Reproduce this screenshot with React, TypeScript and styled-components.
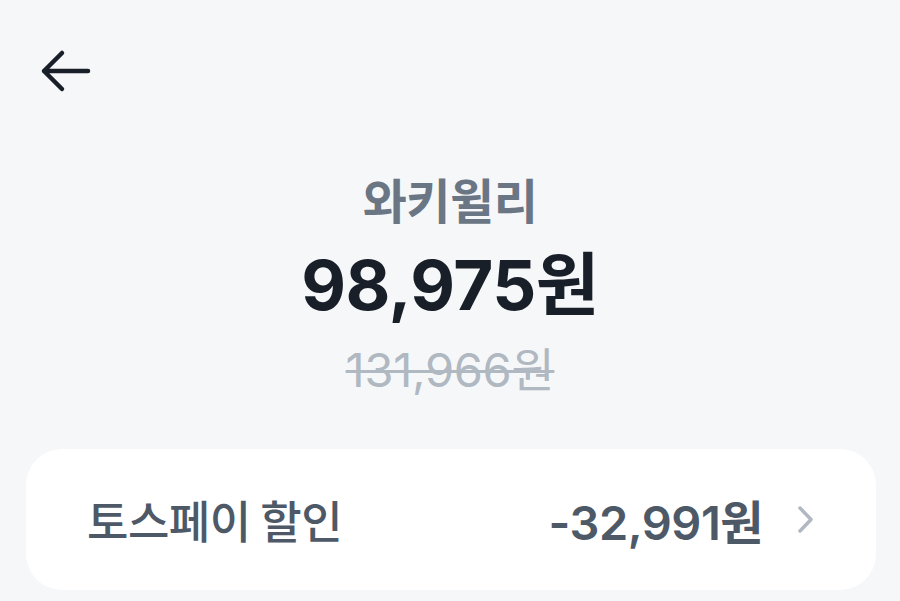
import React from "react";
import styled, { createGlobalStyle } from "styled-components";

const Global = createGlobalStyle`
  html, body { margin: 0; padding: 0; background: #f6f7f9; }
  body { font-family: Inter, "Noto Sans CJK KR", sans-serif; }
`;

const Page = styled.div`
  width: 900px;
  height: 601px;
  overflow: hidden;
  background: #f6f7f9;
  display: flex;
  flex-direction: column;
`;

const TopBar = styled.div`
  height: 140px;
  display: flex;
  align-items: flex-start;
  padding: 48px 0 0 40px;
  box-sizing: border-box;
`;

const BackButton = styled.button`
  border: none;
  background: none;
  padding: 0;
  width: 54px;
  height: 46px;
  display: flex;
  align-items: center;
  cursor: pointer;
`;

const Summary = styled.div`
  padding-top: 28px;
  display: flex;
  flex-direction: column;
  align-items: center;
`;

const Brand = styled.div`
  font-family: "Noto Sans CJK KR", sans-serif;
  font-size: 48px;
  font-weight: 600;
  color: #6b7684;
  line-height: 60px;
  letter-spacing: -0.5px;
`;

const Price = styled.div`
  margin-top: 17px;
  font-size: 69px;
  font-weight: 700;
  color: #191f28;
  line-height: 80px;
  letter-spacing: -0.5px;
`;

const Original = styled.div`
  margin-top: 17px;
  font-size: 47px;
  font-weight: 400;
  color: #b0b8c1;
  line-height: 56px;
  text-decoration: line-through;
  text-decoration-thickness: 3px;
  letter-spacing: -0.3px;
`;

const Card = styled.div`
  margin: 51px 24px 0 26px;
  height: 141px;
  background: #ffffff;
  border-radius: 36px;
  display: flex;
  align-items: center;
  padding: 0 62px 0 61px;
  box-sizing: border-box;
`;

const Label = styled.div`
  flex: 1;
  font-family: "Noto Sans CJK KR", sans-serif;
  font-size: 45px;
  font-weight: 500;
  color: #4e5968;
  letter-spacing: -0.5px;
`;

const Amount = styled.div`
  font-size: 47px;
  font-weight: 600;
  color: #4e5968;
  letter-spacing: -0.5px;
`;

const Chevron = styled.span`
  margin-left: 34px;
  display: flex;
  align-items: center;
`;

export default function App() {
  return (
    <Page>
      <Global />
      <TopBar>
        <BackButton aria-label="back">
          <svg width="52" height="46" viewBox="0 0 52 46" fill="none">
            <path
              d="M4 23 H48 M22 5 L4 23 L22 41"
              stroke="#191f28"
              strokeWidth="4.5"
              strokeLinecap="round"
              strokeLinejoin="round"
            />
          </svg>
        </BackButton>
      </TopBar>
      <Summary>
        <Brand>와키윌리</Brand>
        <Price>98,975원</Price>
        <Original>131,966원</Original>
      </Summary>
      <Card>
        <Label>토스페이 할인</Label>
        <Amount>-32,991원</Amount>
        <Chevron>
          <svg width="17" height="29" viewBox="0 0 17 29" fill="none">
            <path
              d="M3 3 L14 14.5 L3 26"
              stroke="#b0b8c1"
              strokeWidth="3.5"
              strokeLinecap="round"
              strokeLinejoin="round"
            />
          </svg>
        </Chevron>
      </Card>
    </Page>
  );
}
